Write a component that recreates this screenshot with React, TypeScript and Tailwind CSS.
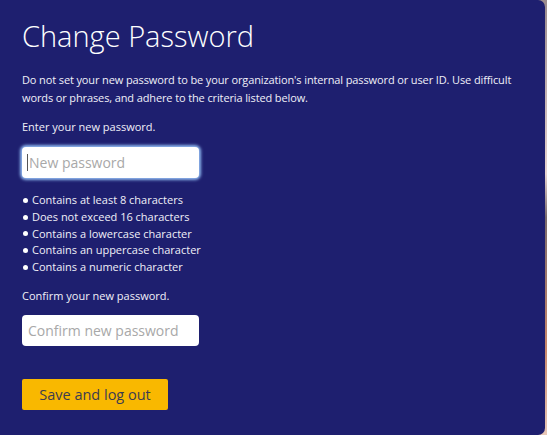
import React from "react";

export default function App() {
  const rules = [
    "Contains at least 8 characters",
    "Does not exceed 16 characters",
    "Contains a lowercase character",
    "Contains an uppercase character",
    "Contains a numeric character",
  ];
  return (
    <div
      className="w-[547px] h-[435px] flex bg-[linear-gradient(180deg,#9a8a8c_0%,#e8d4d0_40%,#7a6a6c_50%,#c9876a_80%,#e8c8b8_100%)]"
      style={{ fontFamily: '"Open Sans", "Noto Sans", sans-serif' }}
    >
      <div className="w-[545px] h-[435px] bg-[#1e1f6f] rounded-r-[7px] pl-[22px] pt-[16px] text-white">
        <h1 className="text-[29px] font-light leading-[40px]">Change Password</h1>
        <p className="mt-[15px] text-[11px] leading-[18px] w-[512px] tracking-[-0.12px] text-[#f0f0f8]">
          Do not set your new password to be your organization's internal password or user ID. Use difficult words or phrases, and adhere to the criteria listed below.
        </p>
        <p className="mt-[11px] text-[11px] leading-[18px] text-[#f0f0f8]">Enter your new password.</p>
        <div className="mt-[11px] w-[177px] h-[31px] bg-white rounded-[4px] shadow-[0_0_3px_2px_#8fb8f0] flex items-center pl-[5px]">
          <span className="w-px h-[17px] bg-[#555]" />
          <span className="text-[14px] text-[#a8a8a8] pl-[1px]">New password</span>
        </div>
        <ul className="mt-[14px] text-[11px] leading-[16.8px] text-[#f0f0f8]">
          {rules.map((r) => (
            <li key={r} className="flex items-center">
              <span className="w-[5px] h-[5px] rounded-full bg-white mr-[4px] ml-[1px]" />
              {r}
            </li>
          ))}
        </ul>
        <p className="mt-[11px] text-[11px] leading-[18px] text-[#f0f0f8]">Confirm your new password.</p>
        <div className="mt-[10px] w-[177px] h-[31px] bg-white rounded-[4px] flex items-center pl-[6px]">
          <span className="text-[14px] text-[#a8a8a8]">Confirm new password</span>
        </div>
        <button className="mt-[33px] w-[146px] h-[31px] bg-[#f9b800] rounded-[2px] text-[14.5px] text-[#3c3c50] flex items-center justify-center">
          Save and log out
        </button>
      </div>
    </div>
  );
}
